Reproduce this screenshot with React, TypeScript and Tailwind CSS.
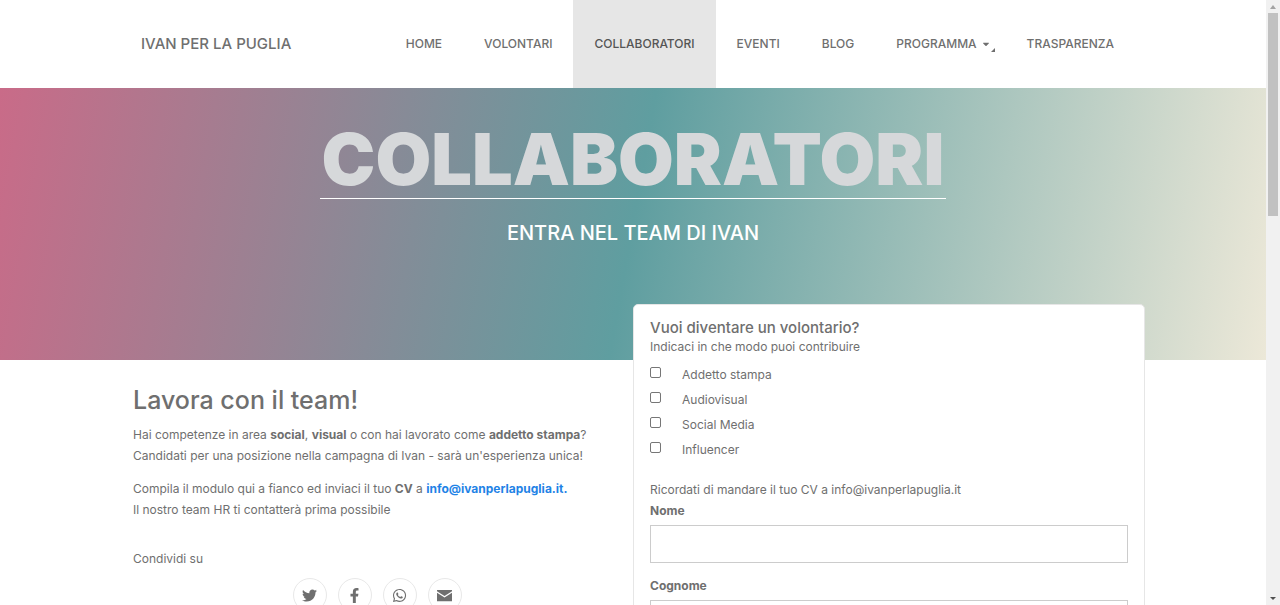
import { FaCaretDown, FaFacebookF, FaTwitter, FaWhatsapp } from "react-icons/fa";

const links = [
  { name: "Home" },
  { name: "Volontari" },
  { name: "Collaboratori", active: true },
  { name: "Eventi" },
  { name: "Blog" },
  { name: "Programma", menu: true },
  { name: "Trasparenza" },
];

const roles = ["Addetto stampa", "Audiovisual", "Social Media", "Influencer"];

function Envelope({ className }: { className?: string }) {
  return (
    <svg viewBox="0 0 16 14" className={className} fill="currentColor">
      <path d="M0 1h16v1.4L8 7.6 0 2.4z" />
      <path d="M0 4l8 5.2L16 4v9H0z" />
    </svg>
  );
}

const socials = [
  { name: "Twitter", Icon: FaTwitter },
  { name: "Facebook", Icon: FaFacebookF },
  { name: "WhatsApp", Icon: FaWhatsapp },
  { name: "Email", Icon: Envelope },
];

function Header() {
  return (
    <header className="bg-white">
      <div className="max-w-[1024px] mx-auto h-[88px] flex justify-between pl-5 pr-[10px]">
        <a href="#" className="self-center text-[15px] leading-5 uppercase font-medium">
          Ivan per la Puglia
        </a>
        <nav className="flex text-[12px] uppercase font-medium">
          {links.map((link) => (
            <a
              key={link.name}
              href="#"
              className={
                link.active
                  ? "flex items-center px-[21px] bg-[#e6e6e6] text-[#555]"
                  : "flex items-center px-[21px]"
              }
            >
              {link.name}
              {link.menu && (
                <span className="flex items-end ml-1 -mr-[10px] h-4">
                  <FaCaretDown className="size-[10px] mb-[3px]" />
                  <svg viewBox="0 0 4 4" className="size-1 fill-current">
                    <path d="M4 0v4H0z" />
                  </svg>
                </span>
              )}
            </a>
          ))}
        </nav>
      </div>
    </header>
  );
}

function Hero() {
  return (
    <section className="h-[272px] pt-9 flex flex-col items-center text-center bg-[linear-gradient(100deg,#c96b88_0%,#5f9ea0_50%,#ece8d8_100%)]">
      <h1 className="text-[72px] leading-[70px] px-0.5 pb-1 border-b border-white uppercase font-black text-[#d6d8da]">
        Collaboratori
      </h1>
      <p className="mt-5 text-[20px] leading-7 uppercase font-medium text-white">
        Entra nel team di Ivan
      </p>
    </section>
  );
}

function Pitch() {
  return (
    <div className="px-3 pt-6 leading-[21px]">
      <h2 className="text-[25px] leading-8 font-medium">Lavora con il team!</h2>
      <p className="mt-2">
        Hai competenze in area <b>social</b>, <b>visual</b> o con hai lavorato come <b>addetto stampa</b>?
        <br />
        Candidati per una posizione nella campagna di Ivan - sarà un'esperienza unica!
      </p>
      <p className="mt-3">
        Compila il modulo qui a fianco ed inviaci il tuo <b>CV</b> a{" "}
        <a href="mailto:info@ivanperlapuglia.it" className="font-bold text-[#1f83e6]">
          info@ivanperlapuglia.it.
        </a>
        <br />
        Il nostro team HR ti contatterà prima possibile
      </p>
      <p className="mt-7">Condividi su</p>
      <div className="mt-[9px] flex justify-center gap-[11px]">
        {socials.map(({ name, Icon }) => (
          <a
            key={name}
            href="#"
            aria-label={name}
            className="size-[34px] rounded-full border border-[#e8e8e8] flex items-center justify-center"
          >
            <Icon className="size-[15px]" />
          </a>
        ))}
      </div>
    </div>
  );
}

function TextField({ id, label }: { id: string; label: string }) {
  return (
    <div className="mb-3">
      <label htmlFor={id} className="block font-bold leading-[21px]">
        {label}
      </label>
      <input
        id={id}
        type="text"
        className="mt-1 block w-full h-[38px] px-3 border border-[#ccc] bg-white"
      />
    </div>
  );
}

function VolunteerForm() {
  return (
    <form className="-mt-14 px-4 pt-3 pb-6 bg-white border border-[#e6e6e6] rounded-[5px]">
      <h3 className="text-[15px] leading-[22px] font-medium">Vuoi diventare un volontario?</h3>
      <p className="leading-4">Indicaci in che modo puoi contribuire</p>
      <div className="mt-2">
        {roles.map((role) => (
          <label key={role} className="flex items-start h-[25px] leading-[23px]">
            <input
              type="checkbox"
              className="appearance-none mt-1 size-[11px] mr-[21px] border border-[#767676] rounded-[2px] bg-white"
            />
            {role}
          </label>
        ))}
      </div>
      <p className="mt-4 leading-[21px]">Ricordati di mandare il tuo CV a info@ivanperlapuglia.it</p>
      <TextField id="nome" label="Nome" />
      <TextField id="cognome" label="Cognome" />
    </form>
  );
}

function Scrollbar() {
  return (
    <div className="w-[14px] shrink-0 bg-[#f1f1f1] flex flex-col items-center justify-between">
      <div className="flex flex-col items-center">
        <svg viewBox="0 0 14 13" className="w-[14px] h-[13px] fill-[#a3a3a3]">
          <path d="M7 5l3 4H4z" />
        </svg>
        <div className="w-[10px] h-[203px] bg-[#c1c1c1]" />
      </div>
      <svg viewBox="0 0 14 13" className="w-[14px] h-[13px] fill-[#505050]">
        <path d="M4 5h6L7 8z" />
      </svg>
    </div>
  );
}

function App() {
  return (
    <div className="flex h-screen overflow-hidden bg-white font-['Inter',sans-serif] text-[12px] text-[#6f6f6f]">
      <div className="flex-1 min-w-0 overflow-hidden">
        <Header />
        <Hero />
        <main className="max-w-[1024px] mx-auto grid grid-cols-2">
          <Pitch />
          <VolunteerForm />
        </main>
      </div>
      <Scrollbar />
    </div>
  );
}

export default App;
